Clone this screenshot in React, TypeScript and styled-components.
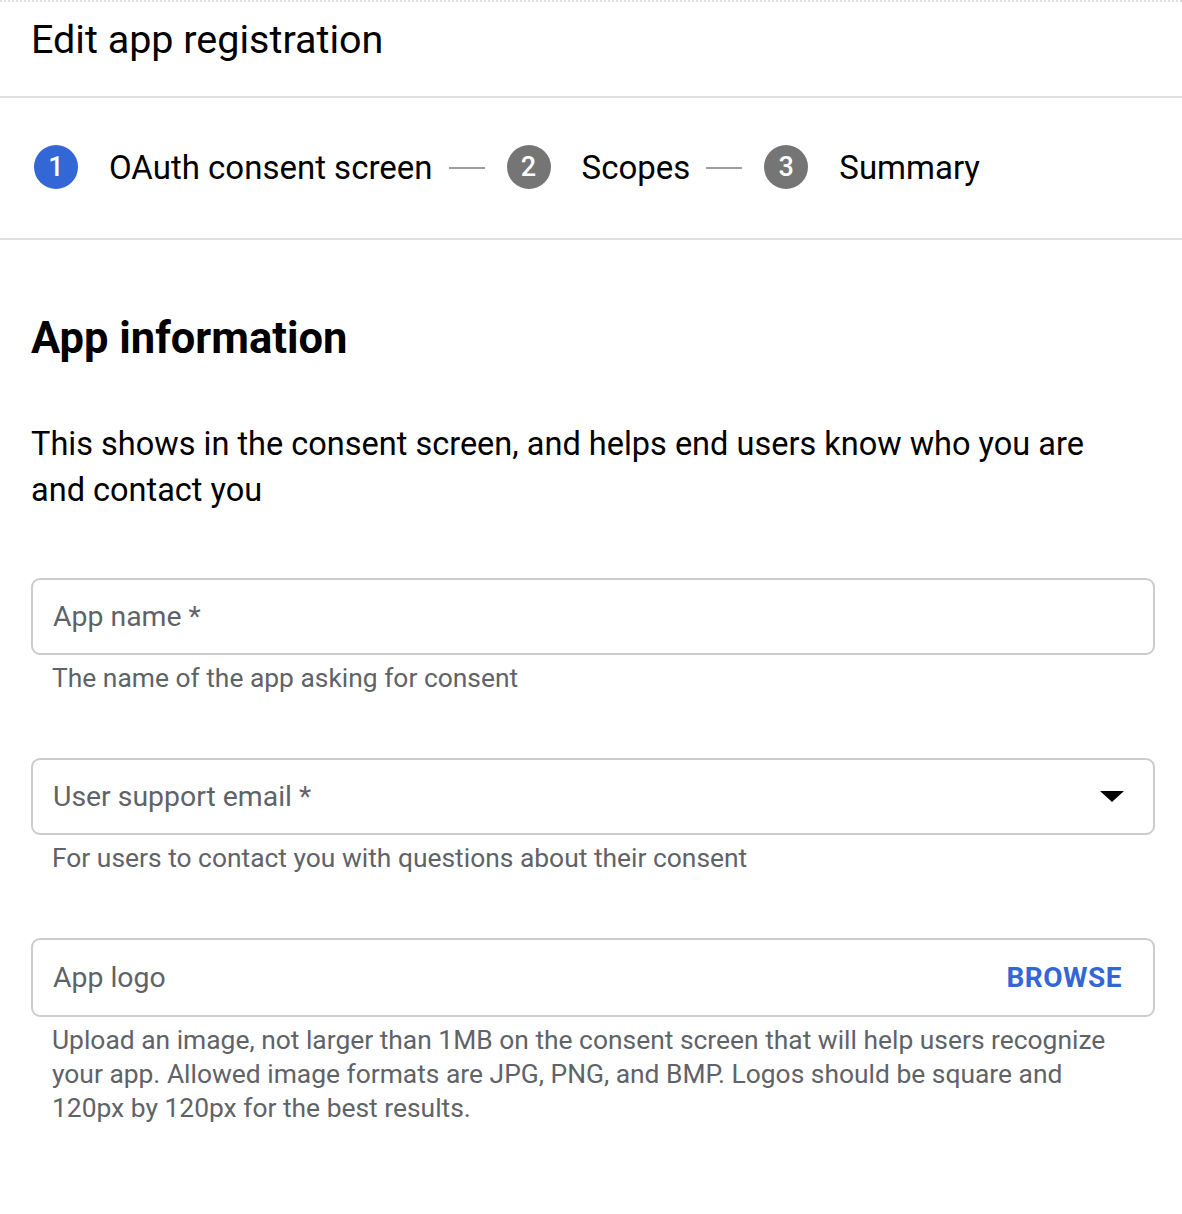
import styled, {createGlobalStyle} from 'styled-components'

const GlobalStyle = createGlobalStyle`
    html, body {
        margin: 0;
        padding: 0;
        background: #fff;
        font-family: Roboto, 'Liberation Sans', Arial, sans-serif;
    }
`

const steps = [
    {num: 1, label: 'OAuth consent screen', active: true},
    {num: 2, label: 'Scopes', active: false},
    {num: 3, label: 'Summary', active: false},
]

export default function App() {
    return (
        <Page>
            <GlobalStyle />
            <Header>
                <PageTitle>Edit app registration</PageTitle>
            </Header>

            <Stepper>
                {steps.map((step, i) => (
                    <StepGroup key={step.num}>
                        {i > 0 && <Connector />}
                        <Step>
                            <StepCircle $active={step.active}>{step.num}</StepCircle>
                            <StepLabel>{step.label}</StepLabel>
                        </Step>
                    </StepGroup>
                ))}
            </Stepper>

            <Content>
                <SectionTitle>App information</SectionTitle>
                <Intro>
                    This shows in the consent screen, and helps end users know who you are and contact you
                </Intro>

                <Field>
                    <FieldBox>
                        <FieldLabel>App name *</FieldLabel>
                    </FieldBox>
                    <Helper>The name of the app asking for consent</Helper>
                </Field>

                <Field>
                    <FieldBox>
                        <FieldLabel>User support email *</FieldLabel>
                        <Arrow />
                    </FieldBox>
                    <Helper>For users to contact you with questions about their consent</Helper>
                </Field>

                <Field>
                    <FieldBox $tall>
                        <FieldLabel>App logo</FieldLabel>
                        <BrowseButton>BROWSE</BrowseButton>
                    </FieldBox>
                    <Helper>
                        Upload an image, not larger than 1MB on the consent screen that will help users recognize
                        your app. Allowed image formats are JPG, PNG, and BMP. Logos should be square and 120px by
                        120px for the best results.
                    </Helper>
                </Field>
            </Content>
        </Page>
    )
}

const Page = styled.div`
    width: 1182px;
    min-height: 1214px;
    background: #fff;
    border-top: 2px dotted #e0e0e0;
    box-sizing: border-box;
`

const Header = styled.header`
    height: 94px;
    padding: 0 31px;
    border-bottom: 2px solid #e0e0e0;
    display: flex;
    align-items: center;
`

const PageTitle = styled.h1`
    margin: 0 0 18px;
    font-size: 39.5px;
    font-weight: 400;
    color: #000;
    line-height: 50px;
`

const Stepper = styled.nav`
    height: 140px;
    padding: 0 34px;
    border-bottom: 2px solid #e0e0e0;
    display: flex;
    align-items: center;
`

const StepGroup = styled.div`
    display: flex;
    align-items: center;
`

const Step = styled.div`
    display: flex;
    align-items: center;
    gap: 31px;
    margin-bottom: 2px;
`

const StepCircle = styled.div<{$active: boolean}>`
    width: 44px;
    height: 44px;
    border-radius: 50%;
    background: ${(props) => (props.$active ? '#3367d6' : '#757575')};
    color: #fff;
    font-size: 27px;
    font-weight: 500;
    display: flex;
    align-items: center;
    justify-content: center;
`

const StepLabel = styled.span`
    font-size: 33px;
    color: #000;
`

const Connector = styled.div`
    width: 36px;
    height: 2px;
    background: #9e9e9e;
    margin: 0 22px 0 16px;
`

const Content = styled.main`
    padding: 74px 27px 0 31px;
    display: flex;
    flex-direction: column;
`

const SectionTitle = styled.h2`
    margin: 0;
    font-size: 43.5px;
    font-weight: 700;
    color: #000;
    line-height: 50px;
`

const Intro = styled.p`
    margin: 57px 40px 65px 0;
    font-size: 32.5px;
    line-height: 46px;
    color: #000;
`

const Field = styled.div`
    display: flex;
    flex-direction: column;
    margin-bottom: 63px;
`

const FieldBox = styled.div<{$tall?: boolean}>`
    height: ${(props) => (props.$tall ? '79px' : '77px')};
    box-sizing: border-box;
    border: 2px solid #cccccc;
    border-radius: 9px;
    padding: 0 29px 0 20px;
    display: flex;
    align-items: center;
    justify-content: space-between;
`

const FieldLabel = styled.span`
    font-size: 28.4px;
    color: #5f6368;
`

const Arrow = styled.span`
    width: 0;
    height: 0;
    border-left: 12px solid transparent;
    border-right: 12px solid transparent;
    border-top: 11px solid #000;
`

const BrowseButton = styled.button`
    background: none;
    border: none;
    padding: 0 2px 0 0;
    font-family: inherit;
    font-size: 28px;
    font-weight: 700;
    letter-spacing: 0.5px;
    color: #3367d6;
    cursor: pointer;
`

const Helper = styled.p`
    margin: 6px 30px 0 21px;
    font-size: 26.4px;
    line-height: 34px;
    color: #5f6368;
`
